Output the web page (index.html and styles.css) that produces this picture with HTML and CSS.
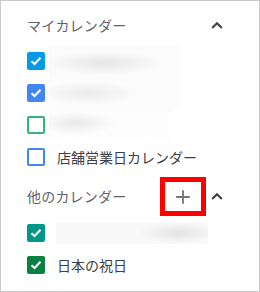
FILE: index.html
```html
<!DOCTYPE html>
<html lang="ja">
<head>
    <meta charset="UTF-8">
    <title>カレンダー</title>
    <link rel="stylesheet" href="styles.css">
</head>
<body>
    <div class="panel">
        <div class="section-head first">
            <span class="section-title">マイカレンダー</span>
            <span class="chevron">
                <svg width="12" height="8" viewBox="0 0 12 8"><polyline points="1.2,7 6,2.2 10.8,7" fill="none" stroke="#3c4043" stroke-width="2"/></svg>
            </span>
        </div>
        <ul class="cal-list">
            <li class="cal-item">
                <span class="box checked peacock"><svg width="14" height="14" viewBox="0 0 14 14"><polyline points="2.5,7.2 5.6,10 11.5,3.8" fill="none" stroke="#fff" stroke-width="2"/></svg></span>
                <span class="redacted r1"></span>
            </li>
            <li class="cal-item">
                <span class="box checked cobalt"><svg width="14" height="14" viewBox="0 0 14 14"><polyline points="2.5,7.2 5.6,10 11.5,3.8" fill="none" stroke="#fff" stroke-width="2"/></svg></span>
                <span class="redacted r2"></span>
            </li>
            <li class="cal-item">
                <span class="box sage"></span>
                <span class="redacted r3"></span>
            </li>
            <li class="cal-item">
                <span class="box cobalt-line"></span>
                <span class="cal-name">店舗営業日カレンダー</span>
            </li>
        </ul>

        <div class="section-head second">
            <span class="section-title">他のカレンダー</span>
            <span class="add-btn">
                <svg width="16" height="16" viewBox="0 0 16 16"><path d="M8 1.2v13.6M1.2 8h13.6" stroke="#757575" stroke-width="1.8" fill="none"/></svg>
            </span>
            <span class="chevron">
                <svg width="12" height="8" viewBox="0 0 12 8"><polyline points="1.2,7 6,2.2 10.8,7" fill="none" stroke="#3c4043" stroke-width="2"/></svg>
            </span>
        </div>
        <ul class="cal-list">
            <li class="cal-item">
                <span class="box checked teal"><svg width="14" height="14" viewBox="0 0 14 14"><polyline points="2.5,7.2 5.6,10 11.5,3.8" fill="none" stroke="#fff" stroke-width="2"/></svg></span>
                <span class="redacted r4"></span>
            </li>
            <li class="cal-item">
                <span class="box checked basil"><svg width="14" height="14" viewBox="0 0 14 14"><polyline points="2.5,7.2 5.6,10 11.5,3.8" fill="none" stroke="#fff" stroke-width="2"/></svg></span>
                <span class="cal-name">日本の祝日</span>
            </li>
        </ul>
    </div>
</body>
</html>
```

FILE: styles.css
```css
body {
    margin: 0;
    font-family: "Noto Sans CJK JP", "Noto Sans", sans-serif;
    background: #fff;
}
.panel {
    box-sizing: border-box;
    width: 260px;
    height: 292px;
    border: 1px solid #c9c9c9;
    padding: 8px 31px 0 26px;
    overflow: hidden;
}
.section-head {
    display: flex;
    align-items: center;
    height: 32px;
}
.section-head.first {
    margin-bottom: 4px;
}
.section-head.second {
    margin-top: 7px;
    margin-bottom: 5px;
}
.section-title {
    flex: 1;
    font-size: 14px;
    color: #5f6368;
    letter-spacing: 0.2px;
}
.chevron {
    width: 22px;
    display: flex;
    justify-content: center;
    align-items: center;
}
.add-btn {
    box-sizing: border-box;
    width: 46px;
    height: 39px;
    border: 5px solid #ff0000;
    display: flex;
    justify-content: center;
    align-items: center;
    margin-top: 1px;
}
.cal-list {
    list-style: none;
    margin: 0;
    padding: 0;
}
.cal-item {
    display: flex;
    align-items: center;
    height: 32px;
}
.box {
    box-sizing: border-box;
    width: 18px;
    height: 18px;
    border-radius: 2px;
    margin-right: 12px;
    flex-shrink: 0;
    display: flex;
    justify-content: center;
    align-items: center;
}
.peacock { background: #039be5; }
.cobalt { background: #4285f4; }
.teal { background: #009688; }
.basil { background: #0b8043; }
.sage { border: 2px solid #33b679; }
.cobalt-line { border: 2px solid #4285f4; }
.cal-name {
    font-size: 14px;
    color: #3c4043;
}
.redacted {
    display: block;
    height: 32px;
    margin-left: -8px;
}
.r1 {
    width: 131px;
    background: radial-gradient(ellipse 60px 12px at 55px 18px, #e6e6e6, #f3f3f3 60%, #fbfbfb);
}
.r2 {
    width: 131px;
    background: radial-gradient(ellipse 50px 12px at 40px 16px, #ececec, #f5f5f5 60%, #fcfcfc);
}
.r3 {
    width: 124px;
    background: radial-gradient(ellipse 40px 12px at 28px 14px, #e8e8e8, #f6f6f6 60%, #fdfdfd);
}
.r4 {
    width: 152px;
    height: 22px;
    margin-left: -1px;
    background: radial-gradient(ellipse 40px 11px at 122px 11px, #e3e3e3, #f1f1f1 60%, #f9f9f9);
}
```
